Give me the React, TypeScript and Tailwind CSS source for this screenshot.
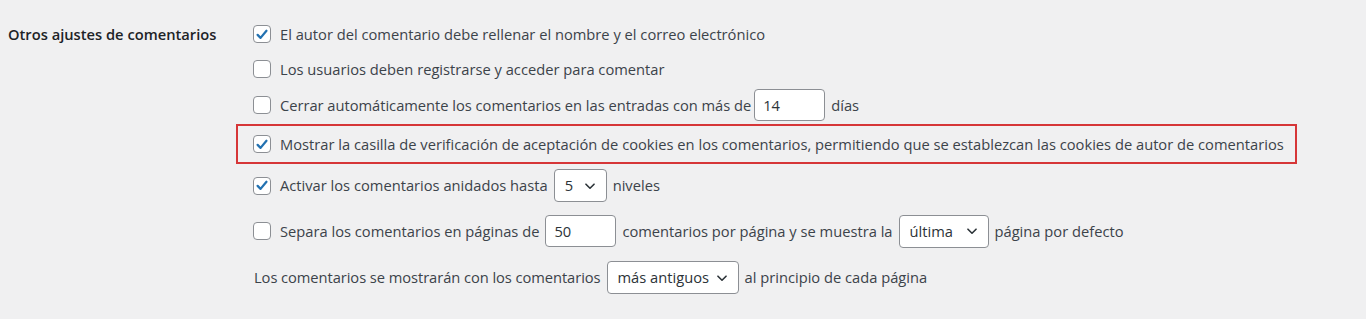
import type { ReactNode } from "react";

const font = { fontFamily: '"Open Sans", "Noto Sans", sans-serif' };

function Checkbox({ checked }: { checked?: boolean }) {
  return (
    <span className="flex h-[18px] w-[18px] shrink-0 items-center justify-center rounded-[4px] border border-[#8c8f94] bg-white">
      {checked && (
        <svg viewBox="0 0 20 20" width="17" height="17">
          <path d="M4.5 10.5 8.2 14.2 15.6 5.3" fill="none" stroke="#2271b1" strokeWidth="2.8" strokeLinecap="round" strokeLinejoin="round" />
        </svg>
      )}
    </span>
  );
}

function TextInput({ value }: { value: string }) {
  return (
    <span className="flex h-[32px] w-[71px] shrink-0 items-center rounded-[4px] border border-[#8c8f94] bg-white px-[8px] text-[#2c3338]">
      {value}
    </span>
  );
}

function Select({ value, width }: { value: string; width: string }) {
  return (
    <span className={`flex h-[33px] shrink-0 items-center justify-between rounded-[4px] border border-[#8c8f94] bg-white pl-[10px] pr-[7px] text-[#2c3338] ${width}`}>
      <span>{value}</span>
      <svg viewBox="0 0 20 20" width="18" height="18" fill="none" stroke="#2c3338" strokeWidth="1.8" strokeLinecap="round" strokeLinejoin="round">
        <path d="M5.5 8l4.5 4.5 4.5-4.5" />
      </svg>
    </span>
  );
}

function Row({ children, className = "" }: { children: ReactNode; className?: string }) {
  return <div className={`flex items-center gap-[6px] ${className}`}>{children}</div>;
}

export default function App() {
  return (
    <div className="h-[319px] w-full bg-[#f0f0f1] text-[14.7px] text-[#3c434a]" style={font}>
      <div className="flex">
        <div className="w-[236px] shrink-0 pl-[8px] pt-[22px]">
          <div className="flex h-[24px] items-center font-semibold text-[#1d2327]">Otros ajustes de comentarios</div>
        </div>
        <div className="flex flex-col pt-[22px]">
          <Row className="h-[24px] pl-[17px]">
            <Checkbox checked />
            <span className="ml-[3px]">El autor del comentario debe rellenar el nombre y el correo electrónico</span>
          </Row>
          <Row className="mt-[11px] h-[24px] pl-[17px]">
            <Checkbox />
            <span className="ml-[3px]">Los usuarios deben registrarse y acceder para comentar</span>
          </Row>
          <Row className="mt-[8px] h-[32px] pl-[17px]">
            <Checkbox />
            <span className="ml-[3px] mr-[-3px] tracking-[-0.02px]">Cerrar automáticamente los comentarios en las entradas con más de</span>
            <TextInput value="14" />
            <span>días</span>
          </Row>
          <div className="mt-[3px] flex h-[40px] w-[1061px] items-center gap-[6px] border-2 border-[#d63638] pl-[15px]">
            <Checkbox checked />
            <span className="ml-[3px]">Mostrar la casilla de verificación de aceptación de cookies en los comentarios, permitiendo que se establezcan las cookies de autor de comentarios</span>
          </div>
          <Row className="mt-[5px] h-[33px] pl-[17px]">
            <Checkbox checked />
            <span className="ml-[3px]">Activar los comentarios anidados hasta</span>
            <Select value="5" width="w-[53px]" />
            <span>niveles</span>
          </Row>
          <Row className="mt-[12px] h-[34px] pl-[17px]">
            <Checkbox />
            <span className="ml-[3px]">Separa los comentarios en páginas de</span>
            <TextInput value="50" />
            <span>comentarios por página y se muestra la</span>
            <Select value="última" width="w-[90px]" />
            <span>página por defecto</span>
          </Row>
          <Row className="mt-[13px] h-[33px] gap-[5px] pl-[18px]">
            <span className="tracking-[-0.06px]">Los comentarios se mostrarán con los comentarios</span>
            <Select value="más antiguos" width="w-[132px]" />
            <span>al principio de cada página</span>
          </Row>
        </div>
      </div>
    </div>
  );
}
